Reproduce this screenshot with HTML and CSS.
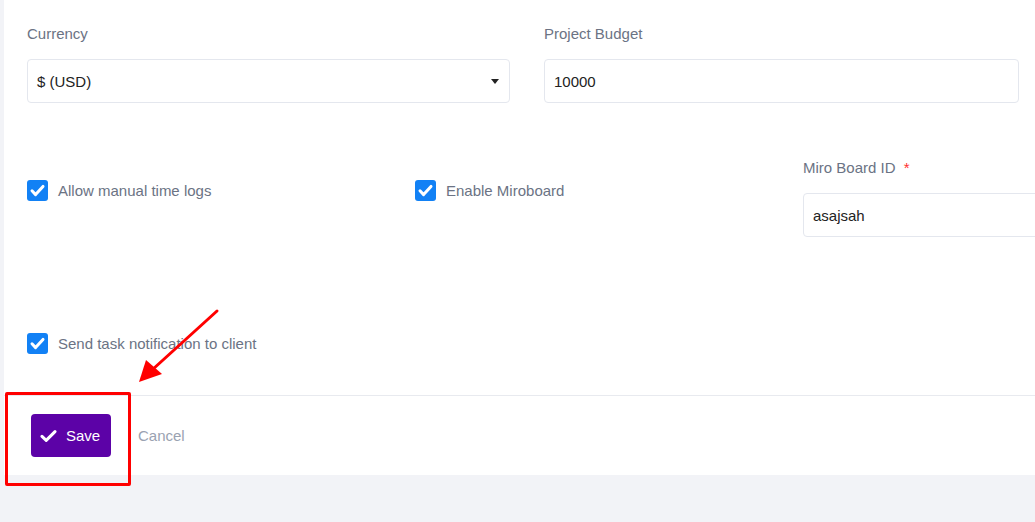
FILE: index.html
```html
<!DOCTYPE html>
<html>
<head>
    <title>Project Settings</title>
    <link rel="stylesheet" href="styles.css">
</head>
<body>
    <div class="card">
        <div class="form-body">
            <div class="row row-two">
                <div class="field">
                    <label class="field-label">Currency</label>
                    <div class="input select">
                        <span>$ (USD)</span>
                        <span class="caret"></span>
                    </div>
                </div>
                <div class="field">
                    <label class="field-label">Project Budget</label>
                    <div class="input">10000</div>
                </div>
            </div>

            <div class="row row-three">
                <div class="check-cell">
                    <span class="checkbox">
                        <svg width="21" height="21" viewBox="0 0 21 21"><path d="M5 10.8 L8.6 14.6 L16 6.4" fill="none" stroke="#fff" stroke-width="3" stroke-linecap="round" stroke-linejoin="round"/></svg>
                    </span>
                    <span class="check-label">Allow manual time logs</span>
                </div>
                <div class="check-cell">
                    <span class="checkbox">
                        <svg width="21" height="21" viewBox="0 0 21 21"><path d="M5 10.8 L8.6 14.6 L16 6.4" fill="none" stroke="#fff" stroke-width="3" stroke-linecap="round" stroke-linejoin="round"/></svg>
                    </span>
                    <span class="check-label">Enable Miroboard</span>
                </div>
                <div class="field">
                    <label class="field-label">Miro Board ID <span class="required">*</span></label>
                    <div class="input wide">asajsah</div>
                </div>
            </div>

            <div class="row row-single">
                <div class="check-cell">
                    <span class="checkbox">
                        <svg width="21" height="21" viewBox="0 0 21 21"><path d="M5 10.8 L8.6 14.6 L16 6.4" fill="none" stroke="#fff" stroke-width="3" stroke-linecap="round" stroke-linejoin="round"/></svg>
                    </span>
                    <span class="check-label">Send task notification to client</span>
                </div>
            </div>
        </div>

        <div class="form-footer">
            <button class="btn-save" type="button">
                <svg width="17" height="14" viewBox="0 0 17 14"><path d="M2 7.4 L6.2 11.4 L15 2.6" fill="none" stroke="#fff" stroke-width="3" stroke-linecap="round" stroke-linejoin="round"/></svg>
                Save
            </button>
            <span class="btn-cancel">Cancel</span>
        </div>
    </div>

    <!-- annotation -->
    <div class="mark-box"></div>
    <svg class="mark-arrow" width="1035" height="522" viewBox="0 0 1035 522">
        <line x1="217" y1="311" x2="152" y2="370" stroke="#ff0000" stroke-width="3" stroke-linecap="round"/>
        <polygon points="139,382 146,360 162,374" fill="#ff0000"/>
    </svg>
</body>
</html>
```

FILE: styles.css
```css
* {
    margin: 0;
    padding: 0;
    box-sizing: border-box;
}

body {
    font-family: "Liberation Sans", Arial, sans-serif;
    font-size: 15px;
    background-color: #f2f3f7;
    width: 1035px;
    height: 522px;
    overflow: hidden;
}

.card {
    margin-left: 4px;
    width: 1200px;
    background-color: #fff;
}

.form-body {
    padding: 24px 0 0 23px;
}

.row {
    display: grid;
    align-items: start;
}

.row-two {
    grid-template-columns: 483px 475px;
    column-gap: 34px;
}

.row-three {
    margin-top: 55px;
    grid-template-columns: 388px 388px 300px;
}

.row-single {
    margin-top: 96px;
}

.field-label {
    display: block;
    line-height: 20px;
    color: #6b7384;
    margin-bottom: 15px;
}

.required {
    color: #ff3030;
    margin-left: 4px;
}

.input {
    height: 44px;
    border: 1px solid #e4e7ee;
    border-radius: 4px;
    padding: 0 9px;
    display: flex;
    align-items: center;
    color: #222;
}

.input.wide {
    width: 300px;
}

.select {
    justify-content: space-between;
    padding-right: 10px;
}

.caret {
    width: 0;
    height: 0;
    border-left: 4px solid transparent;
    border-right: 4px solid transparent;
    border-top: 5px solid #222;
}

.check-cell {
    display: flex;
    align-items: center;
    gap: 10px;
    padding-top: 22px;
}

.row-single .check-cell {
    padding-top: 0;
}

.checkbox {
    width: 21px;
    height: 21px;
    border-radius: 3px;
    background-color: #1281f5;
    display: block;
}

.checkbox svg {
    display: block;
}

.check-label {
    color: #6b7384;
    line-height: 20px;
}

.form-footer {
    margin-top: 41px;
    border-top: 1px solid #e8eaef;
    height: 80px;
    padding: 18px 0 0 27px;
    display: flex;
    align-items: flex-start;
    gap: 27px;
}

.btn-save {
    width: 80px;
    height: 43px;
    background-color: #5c02a7;
    color: #fff;
    border: none;
    border-radius: 4px;
    font-family: "Liberation Sans", Arial, sans-serif;
    font-size: 15px;
    display: flex;
    align-items: center;
    justify-content: center;
    gap: 9px;
    padding-right: 2px;
}

.btn-cancel {
    color: #9aa2b1;
    line-height: 43px;
}

.mark-box {
    position: absolute;
    left: 5px;
    top: 392px;
    width: 126px;
    height: 94px;
    border: 3px solid #ff0000;
    border-radius: 2px;
}

.mark-arrow {
    position: absolute;
    left: 0;
    top: 0;
}
```
